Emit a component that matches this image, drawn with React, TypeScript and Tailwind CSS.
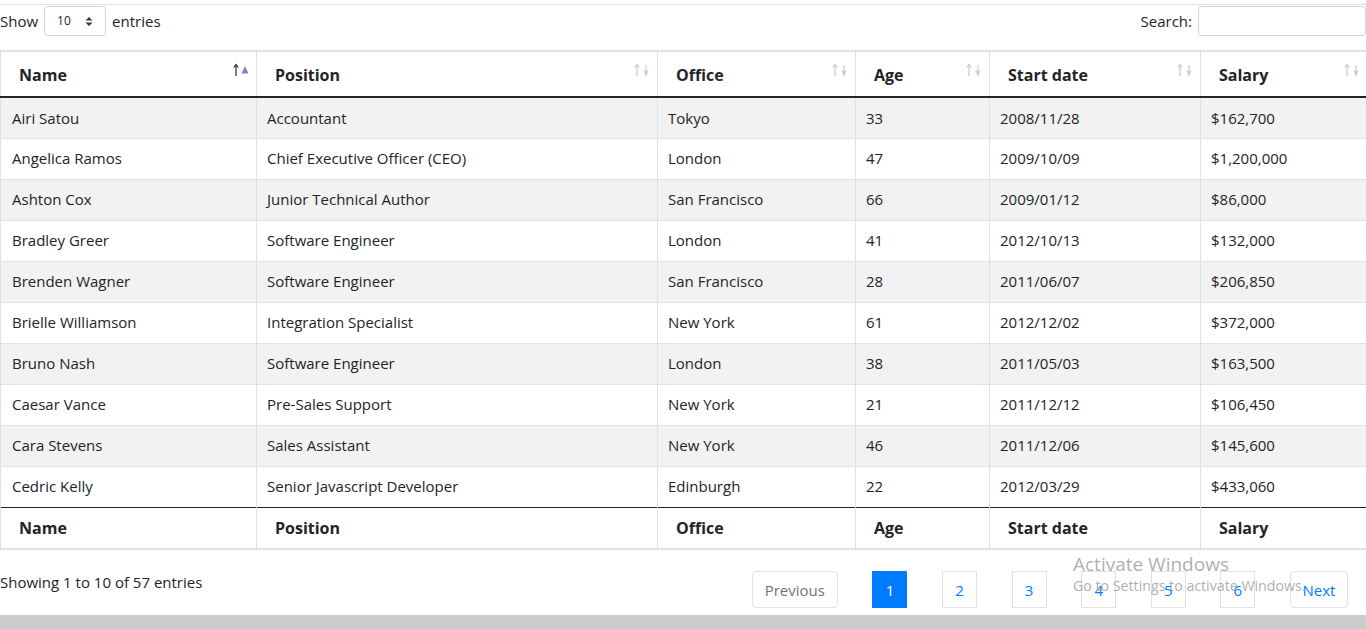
import React from "react";

type Row = [string, string, string, string, string, string];

const ROWS: Row[] = [
  ["Airi Satou", "Accountant", "Tokyo", "33", "2008/11/28", "$162,700"],
  ["Angelica Ramos", "Chief Executive Officer (CEO)", "London", "47", "2009/10/09", "$1,200,000"],
  ["Ashton Cox", "Junior Technical Author", "San Francisco", "66", "2009/01/12", "$86,000"],
  ["Bradley Greer", "Software Engineer", "London", "41", "2012/10/13", "$132,000"],
  ["Brenden Wagner", "Software Engineer", "San Francisco", "28", "2011/06/07", "$206,850"],
  ["Brielle Williamson", "Integration Specialist", "New York", "61", "2012/12/02", "$372,000"],
  ["Bruno Nash", "Software Engineer", "London", "38", "2011/05/03", "$163,500"],
  ["Caesar Vance", "Pre-Sales Support", "New York", "21", "2011/12/12", "$106,450"],
  ["Cara Stevens", "Sales Assistant", "New York", "46", "2011/12/06", "$145,600"],
  ["Cedric Kelly", "Senior Javascript Developer", "Edinburgh", "22", "2012/03/29", "$433,060"],
];

const COLS = [
  { label: "Name", w: "w-[256px]" },
  { label: "Position", w: "w-[401px]" },
  { label: "Office", w: "w-[198px]" },
  { label: "Age", w: "w-[134px]" },
  { label: "Start date", w: "w-[211px]" },
  { label: "Salary", w: "w-[166px]" },
];

function SortIcon({ active }: { active?: boolean }) {
  return (
    <svg width="18" height="15" viewBox="0 0 18 15" className="absolute right-[6px] top-[11px]">
      {/* up arrow */}
      <line x1="4" y1="2" x2="4" y2="13" stroke={active ? "#1f2937" : "#c8c8c8"} strokeWidth="1.2" />
      <path d="M1.8 4.5 L4 1.5 L6.2 4.5" fill="none" stroke={active ? "#1f2937" : "#c8c8c8"} strokeWidth="1.2" />
      {active ? (
        <path d="M9.5 10.5 L13 3 L16.5 10.5 Z" fill="#7c80d6" />
      ) : (
        <>
          <line x1="13" y1="2" x2="13" y2="13" stroke="#d0d0d0" strokeWidth="1.3" />
          <path d="M10.3 7.5 L13 13.5 L15.7 7.5 Z" fill="#d0d0d0" />
        </>
      )}
    </svg>
  );
}

export default function App() {
  return (
    <div className="relative h-[629px] w-[1366px] overflow-hidden bg-white font-['Open_Sans',sans-serif] text-[15px] text-[#212529]">
      <div className="mt-[4px] border-t border-[#dee2e6]">
        {/* top controls */}
        <div className="flex h-[45px] items-start justify-between pt-[1px]">
          <label className="flex items-center gap-[6px]">
            Show
            <span className="flex h-[30px] w-[62px] items-center justify-between rounded-[4px] border border-[#ced4da] pl-[12px] pr-[12px] text-[12px]">
              10
              <svg width="8" height="11" viewBox="0 0 8 11">
                <path d="M0.5 4.5 L4 1 L7.5 4.5 Z M0.5 6.5 L4 10 L7.5 6.5 Z" fill="#343a40" />
              </svg>
            </span>
            entries
          </label>
          <label className="flex items-center gap-[6px]">
            Search:
            <span className="block h-[30px] w-[168px] rounded-[4px] border border-[#ced4da]" />
          </label>
        </div>

        {/* table */}
        <table className="w-[1366px] table-fixed border-collapse">
          <thead>
            <tr className="h-[46px] border-t-2 border-[#dee2e6]">
              {COLS.map((c) => (
                <th
                  key={c.label}
                  className={`${c.w} relative border-b-2 border-l border-b-[#212529] border-l-[#dee2e6] px-[18px] pt-[2px] text-left text-[16px] font-bold`}
                >
                  {c.label}
                  <SortIcon active={c.label === "Name"} />
                </th>
              ))}
            </tr>
          </thead>
          <tbody>
            {ROWS.map((r, ri) => (
              <tr key={r[0]} className={`h-[41px] ${ri % 2 === 0 ? "bg-[#f2f2f2]" : "bg-white"}`}>
                {r.map((cell, ci) => (
                  <td key={ci} className="border-t border-l border-[#dee2e6] px-[10px] first:pl-[11px]">
                    {cell}
                  </td>
                ))}
              </tr>
            ))}
          </tbody>
          <tfoot>
            <tr className="h-[42px] border-b-2 border-[#dee2e6]">
              {COLS.map((c) => (
                <th
                  key={c.label}
                  className="border-t border-l border-t-[#212529] border-l-[#dee2e6] px-[18px] text-left text-[16px] font-bold"
                >
                  {c.label}
                </th>
              ))}
            </tr>
          </tfoot>
        </table>

        {/* bottom controls */}
        <div className="flex h-[66px] items-start justify-between">
          <div className="pt-[21px]">Showing 1 to 10 of 57 entries</div>
          <div className="mr-[18px] flex items-center gap-[34.6px] pt-[21px]">
            <span className="flex h-[37px] w-[86px] items-center justify-center rounded-[4px] border border-[#dee2e6] pt-[2px] text-[#6c757d]">
              Previous
            </span>
            {[1, 2, 3, 4, 5, 6].map((n) => (
              <span
                key={n}
                className={`flex h-[37px] w-[35px] items-center justify-center border pt-[2px] ${
                  n === 1 ? "border-[#007bff] bg-[#007bff] text-white" : "border-[#dee2e6] text-[#007bff]"
                }`}
              >
                {n}
              </span>
            ))}
            <span className="flex h-[37px] w-[58px] items-center justify-center rounded-[4px] border border-[#dee2e6] pt-[2px] text-[#007bff]">
              Next
            </span>
          </div>
        </div>
      </div>

      {/* scrollbar */}
      <div className="absolute bottom-0 left-0 h-[14px] w-full bg-[#cbcbcb]" />

      {/* OS watermark */}
      <div className="pointer-events-none absolute left-[1073px] top-[552px] text-[#9a9a9a]/80">
        <div className="text-[19px] leading-[24px]">Activate Windows</div>
        <div className="text-[14.2px] leading-[20px]">Go to Settings to activate Windows.</div>
      </div>
    </div>
  );
}
